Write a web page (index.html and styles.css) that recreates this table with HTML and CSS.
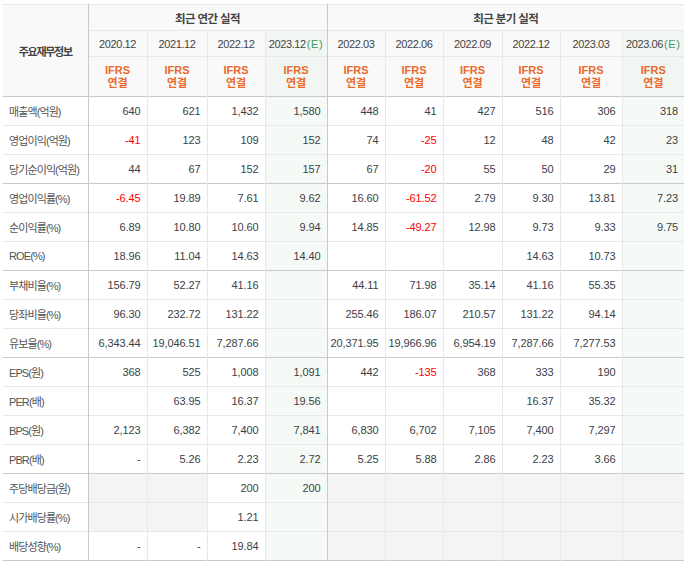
FILE: index.html
```html
<!DOCTYPE html>
<html lang="ko">
<head>
<meta charset="utf-8">
<title>주요재무정보</title>
<link rel="stylesheet" href="styles.css">
</head>
<body>
<table class="fin">
  <colgroup>
    <col class="c-label">
    <col class="c-a1"><col class="c-a2"><col class="c-a3"><col class="c-a4">
    <col class="c-q1"><col class="c-q2"><col class="c-q3"><col class="c-q4"><col class="c-q5"><col class="c-q6">
  </colgroup>
  <thead>
    <tr class="h1">
      <th class="title" rowspan="3">주요재무정보</th>
      <th class="grp sep" colspan="4">최근 연간 실적</th>
      <th class="grp" colspan="6">최근 분기 실적</th>
    </tr>
    <tr class="h2">
      <th class="per">2020.12</th>
      <th class="per">2021.12</th>
      <th class="per">2022.12</th>
      <th class="per est sep">2023.12<span class="e">(E)</span></th>
      <th class="per">2022.03</th>
      <th class="per">2022.06</th>
      <th class="per">2022.09</th>
      <th class="per">2022.12</th>
      <th class="per">2023.03</th>
      <th class="per est">2023.06<span class="e">(E)</span></th>
    </tr>
    <tr class="h3">
      <th class="ifrs">IFRS<br>연결</th>
      <th class="ifrs">IFRS<br>연결</th>
      <th class="ifrs">IFRS<br>연결</th>
      <th class="ifrs est sep">IFRS<br>연결</th>
      <th class="ifrs">IFRS<br>연결</th>
      <th class="ifrs">IFRS<br>연결</th>
      <th class="ifrs">IFRS<br>연결</th>
      <th class="ifrs">IFRS<br>연결</th>
      <th class="ifrs">IFRS<br>연결</th>
      <th class="ifrs est">IFRS<br>연결</th>
    </tr>
  </thead>
  <tbody>
    <tr class="grp-start">
      <th class="lbl">매출액(억원)</th>
      <td>640</td><td>621</td><td>1,432</td><td class="est sep">1,580</td>
      <td>448</td><td>41</td><td>427</td><td>516</td><td>306</td><td class="est">318</td>
    </tr>
    <tr>
      <th class="lbl">영업이익(억원)</th>
      <td class="neg">-41</td><td>123</td><td>109</td><td class="est sep">152</td>
      <td>74</td><td class="neg">-25</td><td>12</td><td>48</td><td>42</td><td class="est">23</td>
    </tr>
    <tr>
      <th class="lbl">당기순이익(억원)</th>
      <td>44</td><td>67</td><td>152</td><td class="est sep">157</td>
      <td>67</td><td class="neg">-20</td><td>55</td><td>50</td><td>29</td><td class="est">31</td>
    </tr>
    <tr class="grp-start">
      <th class="lbl">영업이익률(%)</th>
      <td class="neg">-6.45</td><td>19.89</td><td>7.61</td><td class="est sep">9.62</td>
      <td>16.60</td><td class="neg">-61.52</td><td>2.79</td><td>9.30</td><td>13.81</td><td class="est">7.23</td>
    </tr>
    <tr>
      <th class="lbl">순이익률(%)</th>
      <td>6.89</td><td>10.80</td><td>10.60</td><td class="est sep">9.94</td>
      <td>14.85</td><td class="neg">-49.27</td><td>12.98</td><td>9.73</td><td>9.33</td><td class="est">9.75</td>
    </tr>
    <tr>
      <th class="lbl">ROE(%)</th>
      <td>18.96</td><td>11.04</td><td>14.63</td><td class="est sep">14.40</td>
      <td></td><td></td><td></td><td>14.63</td><td>10.73</td><td class="est"></td>
    </tr>
    <tr class="grp-start">
      <th class="lbl">부채비율(%)</th>
      <td>156.79</td><td>52.27</td><td>41.16</td><td class="est sep"></td>
      <td>44.11</td><td>71.98</td><td>35.14</td><td>41.16</td><td>55.35</td><td class="est"></td>
    </tr>
    <tr>
      <th class="lbl">당좌비율(%)</th>
      <td>96.30</td><td>232.72</td><td>131.22</td><td class="est sep"></td>
      <td>255.46</td><td>186.07</td><td>210.57</td><td>131.22</td><td>94.14</td><td class="est"></td>
    </tr>
    <tr>
      <th class="lbl">유보율(%)</th>
      <td>6,343.44</td><td>19,046.51</td><td>7,287.66</td><td class="est sep"></td>
      <td>20,371.95</td><td>19,966.96</td><td>6,954.19</td><td>7,287.66</td><td>7,277.53</td><td class="est"></td>
    </tr>
    <tr class="grp-start">
      <th class="lbl">EPS(원)</th>
      <td>368</td><td>525</td><td>1,008</td><td class="est sep">1,091</td>
      <td>442</td><td class="neg">-135</td><td>368</td><td>333</td><td>190</td><td class="est"></td>
    </tr>
    <tr>
      <th class="lbl">PER(배)</th>
      <td></td><td>63.95</td><td>16.37</td><td class="est sep">19.56</td>
      <td></td><td></td><td></td><td>16.37</td><td>35.32</td><td class="est"></td>
    </tr>
    <tr>
      <th class="lbl">BPS(원)</th>
      <td>2,123</td><td>6,382</td><td>7,400</td><td class="est sep">7,841</td>
      <td>6,830</td><td>6,702</td><td>7,105</td><td>7,400</td><td>7,297</td><td class="est"></td>
    </tr>
    <tr>
      <th class="lbl">PBR(배)</th>
      <td>-</td><td>5.26</td><td>2.23</td><td class="est sep">2.72</td>
      <td>5.25</td><td>5.88</td><td>2.86</td><td>2.23</td><td>3.66</td><td class="est"></td>
    </tr>
    <tr class="grp-start">
      <th class="lbl">주당배당금(원)</th>
      <td class="na"></td><td class="na"></td><td>200</td><td class="est sep">200</td>
      <td class="na"></td><td class="na"></td><td class="na"></td><td class="na"></td><td class="na"></td><td class="na"></td>
    </tr>
    <tr>
      <th class="lbl">시가배당률(%)</th>
      <td class="na"></td><td class="na"></td><td>1.21</td><td class="est sep"></td>
      <td class="na"></td><td class="na"></td><td class="na"></td><td class="na"></td><td class="na"></td><td class="na"></td>
    </tr>
    <tr class="last">
      <th class="lbl">배당성향(%)</th>
      <td>-</td><td>-</td><td>19.84</td><td class="est sep"></td>
      <td class="na"></td><td class="na"></td><td class="na"></td><td class="na"></td><td class="na"></td><td class="na"></td>
    </tr>
  </tbody>
</table>
</body>
</html>
```

FILE: styles.css
```css
html, body {
  margin: 0;
  padding: 0;
  background: #ffffff;
}

body {
  padding: 4px 0 0 3px;
  font-family: "Liberation Sans", "Noto Sans CJK KR", sans-serif;
  font-size: 11px;
  color: #333333;
}

.fin {
  border-collapse: collapse;
  table-layout: fixed;
  width: 681px;
  border-top: 1px solid #c9c9c9;
  border-bottom: 1px solid #c9c9c9;
}

.c-label { width: 85px; }
.c-a1 { width: 59px; }
.c-a2 { width: 60px; }
.c-a3 { width: 58px; }
.c-a4 { width: 62px; }
.c-q1 { width: 58px; }
.c-q2 { width: 58px; }
.c-q3 { width: 59px; }
.c-q4 { width: 58px; }
.c-q5 { width: 62px; }
.c-q6 { width: 62px; }

.fin th,
.fin td {
  padding: 0;
  border-top: 1px solid #e8e8e8;
  border-left: 1px solid #e8e8e8;
  white-space: nowrap;
  overflow: hidden;
}

.fin tr > :first-child {
  border-left: none;
}

/* header */
.fin thead th {
  background: #f9f9f9;
  font-weight: normal;
  text-align: center;
  color: #333333;
}

.fin thead .h1 th { height: 25px; }
.fin thead .h2 th { height: 25px; }
.fin thead .h3 th { height: 39px; }

.fin .title {
  font-family: "Noto Sans CJK KR", sans-serif;
  font-weight: bold;
  font-size: 11px;
  letter-spacing: -1.3px;
  color: #444444;
  border-right: 1px solid #c9c9c9;
}

.fin .grp {
  font-family: "Noto Sans CJK KR", sans-serif;
  font-weight: bold;
  font-size: 11.5px;
  letter-spacing: -0.6px;
  color: #444444;
}

.fin .per {
  font-size: 11px;
  letter-spacing: -0.4px;
  color: #444444;
}

.fin .e {
  font-family: "Liberation Sans", sans-serif;
  color: #3d9a5b;
  letter-spacing: 0.6px;
  margin-left: 1px;
}

.fin .ifrs {
  font-weight: bold;
  color: #ea6a2c;
  line-height: 13px;
  font-family: "Liberation Sans", "Noto Sans CJK KR", sans-serif;
}

.fin thead .est {
  background: #f1f6f2;
}

/* body */
.fin tbody tr.grp-start > * {
  border-top: 1px solid #c9c9c9;
}

.fin tbody th.lbl {
  height: 28px;
  text-align: left;
  padding-left: 6px;
  font-family: "Liberation Sans", "Noto Sans CJK KR", sans-serif;
  font-weight: normal;
  font-size: 11px;
  letter-spacing: -0.9px;
  color: #555555;
  background: #ffffff;
  border-right: 1px solid #c9c9c9;
}

.fin tbody td {
  height: 28px;
  text-align: right;
  padding-right: 6px;
  color: #3a3f48;
  letter-spacing: -0.1px;
}

.fin .sep {
  border-right: 1px solid #c9c9c9;
}

.fin tbody td.est {
  background: #f5faf6;
}

.fin tbody td.na {
  background: #f4f4f4;
}

.fin tbody td.neg {
  color: #ff0000;
}
```
